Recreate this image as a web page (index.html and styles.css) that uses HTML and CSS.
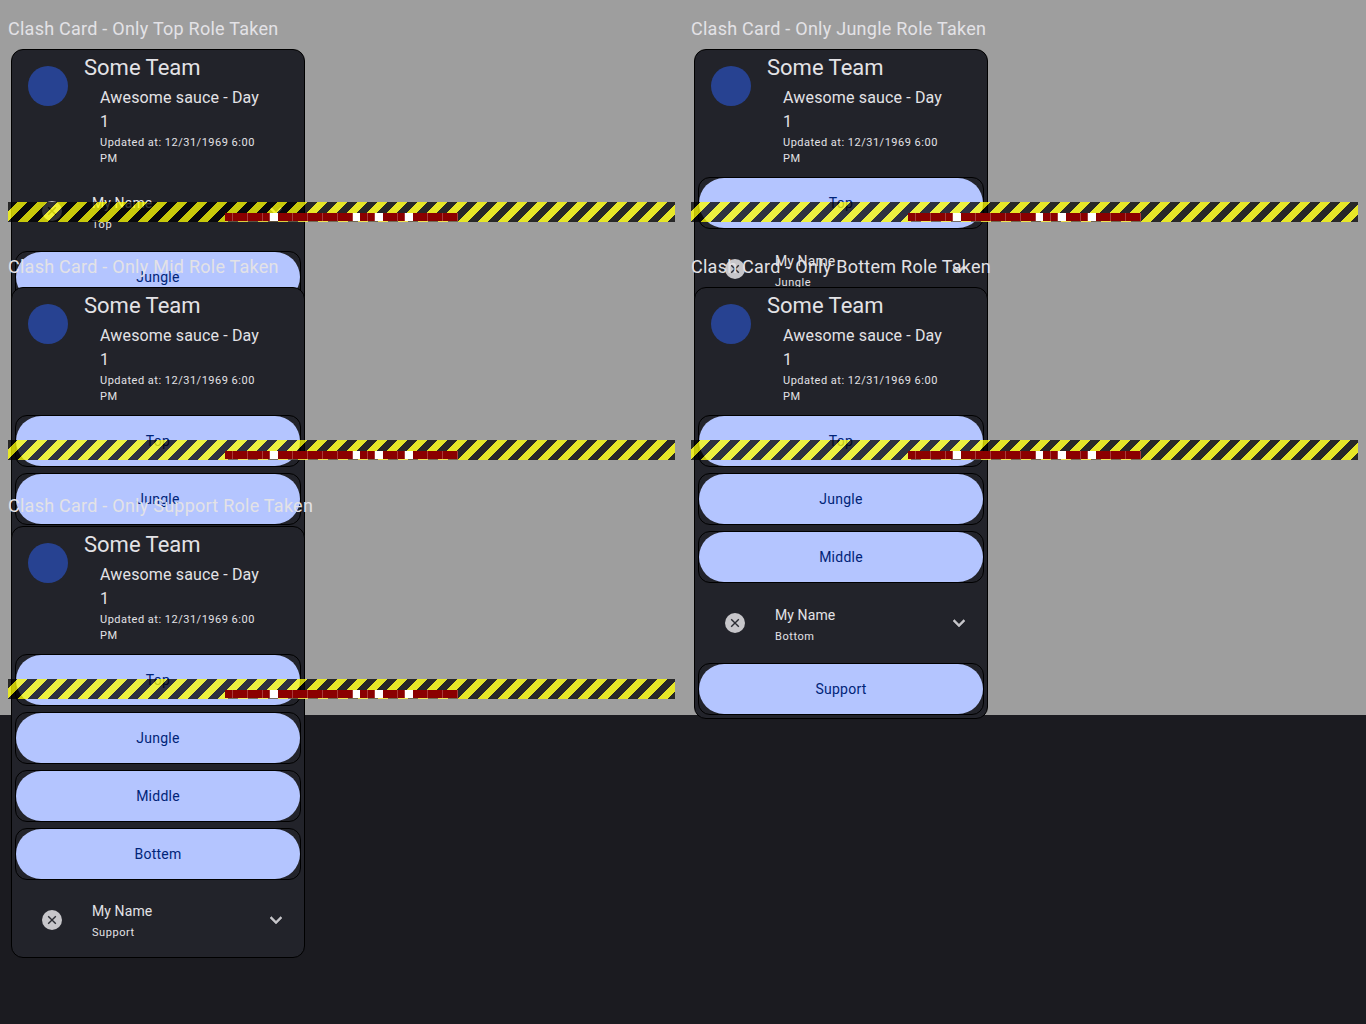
FILE: index.html
```html
<!DOCTYPE html>
<html lang="en">
<head>
<meta charset="utf-8">
<title>Clash Card</title>
<link rel="stylesheet" href="styles.css">
</head>
<body>
<main class="stage">

<section class="cell">
  <h2 class="cell-title">Clash Card - Only Top Role Taken</h2>
  <article class="card">
    <header class="card-head">
      <div class="avatar"></div>
      <div class="head-text">
        <div class="team">Some Team</div>
        <div class="sub">
          <div class="tourney">Awesome sauce - Day 1</div>
          <div class="updated">Updated at: 12/31/1969 6:00 PM</div>
        </div>
      </div>
    </header>
    <div class="roles">
      <div class="player">
        <svg class="remove" viewBox="0 0 24 24"><circle cx="12" cy="12" r="10"/><path d="M8.2 8.2l7.6 7.6M15.8 8.2l-7.6 7.6"/></svg>
        <div class="player-text"><div class="player-name">My Name</div><div class="player-role">Top</div></div>
        <svg class="chev" viewBox="0 0 24 24"><path d="M16.59 8.59L12 13.17 7.41 8.59 6 10l6 6 6-6z"/></svg>
      </div>
      <div class="slot"><button class="pill">Jungle</button></div>
      <div class="slot"><button class="pill">Middle</button></div>
      <div class="slot"><button class="pill">Bottem</button></div>
      <div class="slot"><button class="pill">Support</button></div>
    </div>
  </article>
  <div class="overflow-band"><div class="overflow-label"><i class="u1"></i><i class="u2"></i><i class="u2"></i><i class="u1"></i><b></b><i class="u2"></i><i class="u2"></i><i class="u2"></i><i class="u2"></i><i class="u2"></i><b></b><i class="u1"></i><i class="u1"></i><b></b><i class="u2"></i><i class="u1"></i><b></b><i class="u2"></i><i class="u2"></i><i class="u2"></i></div></div>
</section>

<section class="cell">
  <h2 class="cell-title">Clash Card - Only Jungle Role Taken</h2>
  <article class="card">
    <header class="card-head">
      <div class="avatar"></div>
      <div class="head-text">
        <div class="team">Some Team</div>
        <div class="sub">
          <div class="tourney">Awesome sauce - Day 1</div>
          <div class="updated">Updated at: 12/31/1969 6:00 PM</div>
        </div>
      </div>
    </header>
    <div class="roles">
      <div class="slot"><button class="pill">Top</button></div>
      <div class="player">
        <svg class="remove" viewBox="0 0 24 24"><circle cx="12" cy="12" r="10"/><path d="M8.2 8.2l7.6 7.6M15.8 8.2l-7.6 7.6"/></svg>
        <div class="player-text"><div class="player-name">My Name</div><div class="player-role">Jungle</div></div>
        <svg class="chev" viewBox="0 0 24 24"><path d="M16.59 8.59L12 13.17 7.41 8.59 6 10l6 6 6-6z"/></svg>
      </div>
      <div class="slot"><button class="pill">Middle</button></div>
      <div class="slot"><button class="pill">Bottem</button></div>
      <div class="slot"><button class="pill">Support</button></div>
    </div>
  </article>
  <div class="overflow-band"><div class="overflow-label"><i class="u1"></i><i class="u2"></i><i class="u2"></i><i class="u1"></i><b></b><i class="u2"></i><i class="u2"></i><i class="u2"></i><i class="u2"></i><i class="u2"></i><b></b><i class="u1"></i><i class="u1"></i><b></b><i class="u2"></i><i class="u1"></i><b></b><i class="u2"></i><i class="u2"></i><i class="u2"></i></div></div>
</section>

<section class="cell">
  <h2 class="cell-title">Clash Card - Only Mid Role Taken</h2>
  <article class="card">
    <header class="card-head">
      <div class="avatar"></div>
      <div class="head-text">
        <div class="team">Some Team</div>
        <div class="sub">
          <div class="tourney">Awesome sauce - Day 1</div>
          <div class="updated">Updated at: 12/31/1969 6:00 PM</div>
        </div>
      </div>
    </header>
    <div class="roles">
      <div class="slot"><button class="pill">Top</button></div>
      <div class="slot"><button class="pill">Jungle</button></div>
      <div class="player">
        <svg class="remove" viewBox="0 0 24 24"><circle cx="12" cy="12" r="10"/><path d="M8.2 8.2l7.6 7.6M15.8 8.2l-7.6 7.6"/></svg>
        <div class="player-text"><div class="player-name">My Name</div><div class="player-role">Middle</div></div>
        <svg class="chev" viewBox="0 0 24 24"><path d="M16.59 8.59L12 13.17 7.41 8.59 6 10l6 6 6-6z"/></svg>
      </div>
      <div class="slot"><button class="pill">Bottem</button></div>
      <div class="slot"><button class="pill">Support</button></div>
    </div>
  </article>
  <div class="overflow-band"><div class="overflow-label"><i class="u1"></i><i class="u2"></i><i class="u2"></i><i class="u1"></i><b></b><i class="u2"></i><i class="u2"></i><i class="u2"></i><i class="u2"></i><i class="u2"></i><b></b><i class="u1"></i><i class="u1"></i><b></b><i class="u2"></i><i class="u1"></i><b></b><i class="u2"></i><i class="u2"></i><i class="u2"></i></div></div>
</section>

<section class="cell">
  <h2 class="cell-title">Clash Card - Only Bottem Role Taken</h2>
  <article class="card">
    <header class="card-head">
      <div class="avatar"></div>
      <div class="head-text">
        <div class="team">Some Team</div>
        <div class="sub">
          <div class="tourney">Awesome sauce - Day 1</div>
          <div class="updated">Updated at: 12/31/1969 6:00 PM</div>
        </div>
      </div>
    </header>
    <div class="roles">
      <div class="slot"><button class="pill">Top</button></div>
      <div class="slot"><button class="pill">Jungle</button></div>
      <div class="slot"><button class="pill">Middle</button></div>
      <div class="player">
        <svg class="remove" viewBox="0 0 24 24"><circle cx="12" cy="12" r="10"/><path d="M8.2 8.2l7.6 7.6M15.8 8.2l-7.6 7.6"/></svg>
        <div class="player-text"><div class="player-name">My Name</div><div class="player-role">Bottom</div></div>
        <svg class="chev" viewBox="0 0 24 24"><path d="M16.59 8.59L12 13.17 7.41 8.59 6 10l6 6 6-6z"/></svg>
      </div>
      <div class="slot"><button class="pill">Support</button></div>
    </div>
  </article>
  <div class="overflow-band"><div class="overflow-label"><i class="u1"></i><i class="u2"></i><i class="u2"></i><i class="u1"></i><b></b><i class="u2"></i><i class="u2"></i><i class="u2"></i><i class="u2"></i><i class="u2"></i><b></b><i class="u1"></i><i class="u1"></i><b></b><i class="u2"></i><i class="u1"></i><b></b><i class="u2"></i><i class="u2"></i><i class="u2"></i></div></div>
</section>

<section class="cell">
  <h2 class="cell-title">Clash Card - Only Support Role Taken</h2>
  <article class="card">
    <header class="card-head">
      <div class="avatar"></div>
      <div class="head-text">
        <div class="team">Some Team</div>
        <div class="sub">
          <div class="tourney">Awesome sauce - Day 1</div>
          <div class="updated">Updated at: 12/31/1969 6:00 PM</div>
        </div>
      </div>
    </header>
    <div class="roles">
      <div class="slot"><button class="pill">Top</button></div>
      <div class="slot"><button class="pill">Jungle</button></div>
      <div class="slot"><button class="pill">Middle</button></div>
      <div class="slot"><button class="pill">Bottem</button></div>
      <div class="player">
        <svg class="remove" viewBox="0 0 24 24"><circle cx="12" cy="12" r="10"/><path d="M8.2 8.2l7.6 7.6M15.8 8.2l-7.6 7.6"/></svg>
        <div class="player-text"><div class="player-name">My Name</div><div class="player-role">Support</div></div>
        <svg class="chev" viewBox="0 0 24 24"><path d="M16.59 8.59L12 13.17 7.41 8.59 6 10l6 6 6-6z"/></svg>
      </div>
    </div>
  </article>
  <div class="overflow-band"><div class="overflow-label"><i class="u1"></i><i class="u2"></i><i class="u2"></i><i class="u1"></i><b></b><i class="u2"></i><i class="u2"></i><i class="u2"></i><i class="u2"></i><i class="u2"></i><b></b><i class="u1"></i><i class="u1"></i><b></b><i class="u2"></i><i class="u1"></i><b></b><i class="u2"></i><i class="u2"></i><i class="u2"></i></div></div>
</section>

</main>
</body>
</html>
```

FILE: styles.css
```css
* { box-sizing: border-box; }

html, body {
  margin: 0;
  height: 100%;
}

body {
  background: #1b1b20;
  font-family: Roboto, "Liberation Sans", sans-serif;
  color: #e3e2e6;
  overflow: hidden;
}

.stage {
  display: grid;
  grid-template-columns: 683px 683px;
  grid-template-rows: repeat(3, minmax(0, 1fr));
  height: 715px;
  background: #9e9e9e;
}

.cell {
  position: relative;
  min-height: 0;
  padding: 8px;
}

.cell-title {
  margin: 0;
  height: 41px;
  padding-top: 8px;
  font-size: 18px;
  line-height: 26px;
  font-weight: 400;
  letter-spacing: 0.25px;
  white-space: nowrap;
}

.card {
  width: 294px;
  margin-left: 3px;
  padding: 0 3px 3px;
  background: #22232a;
  border: 1px solid #000;
  border-radius: 12px;
}

.card-head {
  display: flex;
  height: 127px;
  padding-left: 13px;
  padding-right: 37px;
}

.avatar {
  flex: none;
  width: 40px;
  height: 40px;
  margin-top: 16px;
  border-radius: 50%;
  background: #274291;
}

.head-text {
  flex: 1;
  min-width: 0;
  margin-left: 16px;
  padding-top: 4px;
}

.team {
  font-size: 22px;
  line-height: 28px;
}

.sub {
  margin-top: 4px;
  padding-left: 16px;
}

.tourney {
  font-size: 16px;
  line-height: 24px;
  letter-spacing: 0.15px;
}

.updated {
  margin-top: 1px;
  font-size: 11px;
  line-height: 16px;
  font-weight: 400;
  letter-spacing: 0.5px;
}

.roles {
  display: flex;
  flex-direction: column;
  gap: 6px;
}

.slot {
  height: 52px;
  border: 1px solid #000;
  border-radius: 12px;
}

.pill {
  display: block;
  width: 100%;
  height: 50px;
  padding: 0;
  border: 0;
  border-radius: 25px;
  background: #b4c5ff;
  color: #002478;
  font-family: inherit;
  font-size: 14px;
  font-weight: 400;
  letter-spacing: 0.25px;
}

.player {
  display: flex;
  align-items: center;
  height: 68px;
  padding-left: 25px;
  padding-right: 13px;
}

.remove {
  flex: none;
  width: 24px;
  height: 24px;
}

.remove circle { fill: #c7c6ca; }

.remove path {
  fill: none;
  stroke: #2b2c33;
  stroke-width: 1.4;
}

.player-text {
  flex: 1;
  margin-left: 28px;
  padding-top: 3px;
}

.player-name {
  font-size: 14px;
  line-height: 20px;
  font-weight: 400;
  letter-spacing: 0.1px;
}

.player-role {
  margin-top: 4px;
  font-size: 11px;
  line-height: 16px;
  font-weight: 400;
  letter-spacing: 0.55px;
}

.chev {
  flex: none;
  width: 24px;
  height: 24px;
}

.chev path {
  fill: #c7c6ca;
  stroke: #c7c6ca;
  stroke-width: 0.5;
}

/* Debug overflow ribbon that lies over the cell's content */
.overflow-band {
  position: absolute;
  left: 8px;
  right: 8px;
  bottom: 16.4px;
  height: 20px;
  display: flex;
  justify-content: center;
  align-items: flex-end;
  padding-bottom: 1px;
  background: repeating-linear-gradient(
    135deg,
    rgba(0, 0, 0, 0.75) 0,
    rgba(0, 0, 0, 0.75) 7.07px,
    rgba(255, 255, 0, 0.75) 7.07px,
    rgba(255, 255, 0, 0.75) 14.14px
  );
}

.overflow-label {
  display: flex;
  width: 232.5px;
  height: 8px;
  box-shadow: 0 1px 0 rgba(255, 220, 160, 0.35);
}

.overflow-label i {
  display: block;
  height: 8px;
  background: #8b0000;
  border-right: 1px solid #a83a3a;
}

.overflow-label i.u1 { width: 7.5px; }
.overflow-label i.u2 { width: 15px; }

.overflow-label b {
  display: block;
  width: 7.5px;
  height: 8px;
  background: #fff;
}
```
